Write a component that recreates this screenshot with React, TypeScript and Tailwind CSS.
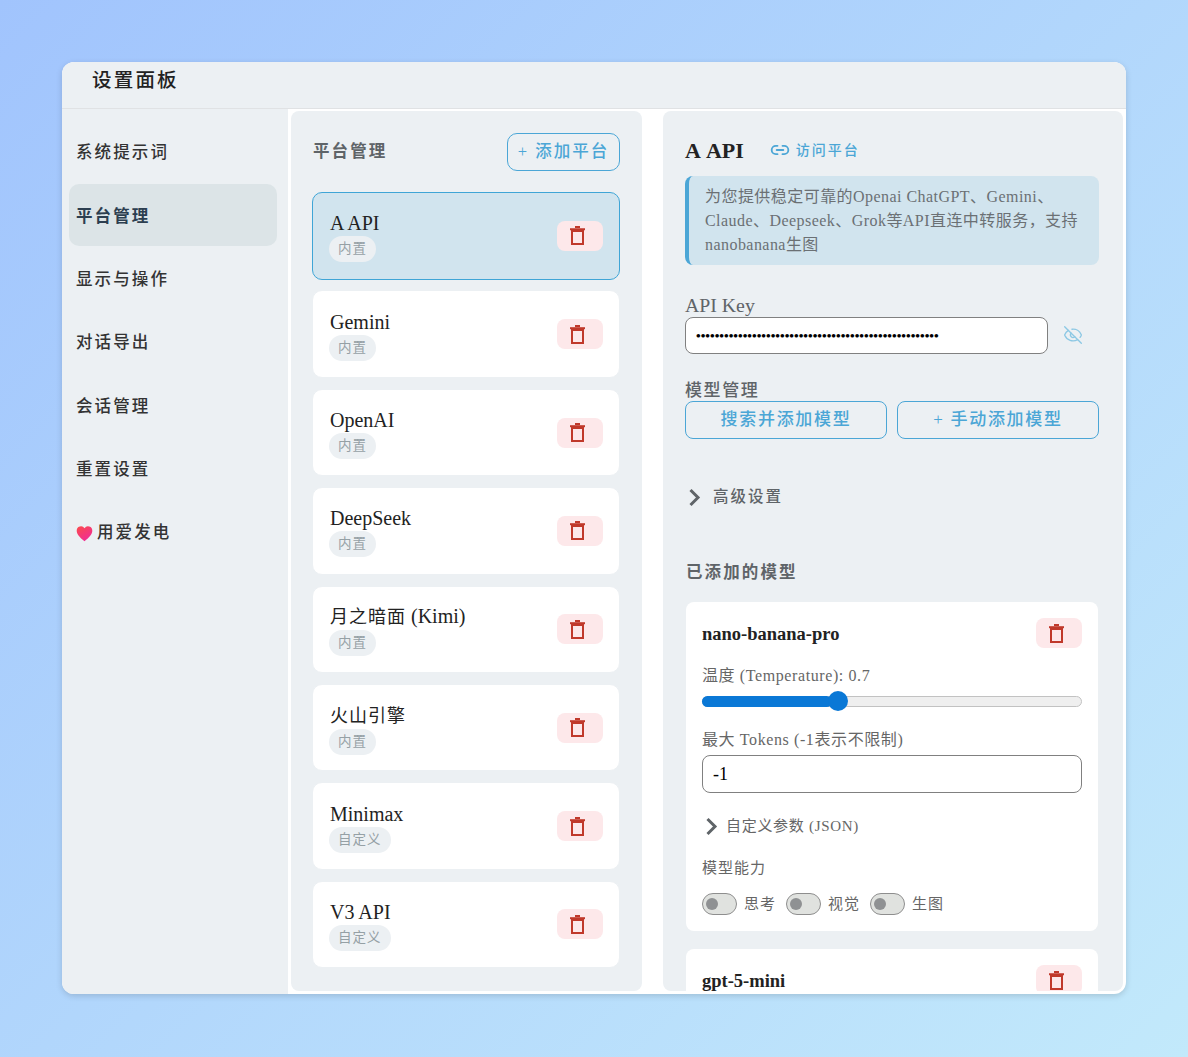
import { ReactNode } from "react";
import { EyeOff, Link2 } from "lucide-react";

const Zh = ({ children }: { children: ReactNode }) => (
  <span className="text-[18px] tracking-[1px]">{children}</span>
);

const platforms: { id: string; name: ReactNode; tag: string; active?: boolean }[] = [
  { id: "a", name: "A API", tag: "内置", active: true },
  { id: "gemini", name: "Gemini", tag: "内置" },
  { id: "openai", name: "OpenAI", tag: "内置" },
  { id: "deepseek", name: "DeepSeek", tag: "内置" },
  { id: "kimi", name: <><Zh>月之暗面</Zh> (Kimi)</>, tag: "内置" },
  { id: "volc", name: <Zh>火山引擎</Zh>, tag: "内置" },
  { id: "minimax", name: "Minimax", tag: "自定义" },
  { id: "v3", name: "V3 API", tag: "自定义" },
];

const menu = ["系统提示词", "平台管理", "显示与操作", "对话导出", "会话管理", "重置设置"];

const TrashIcon = () => (
  <svg width="15" height="19" viewBox="0 0 15 19" fill="none" stroke="#c0392b">
    <path d="M5 1h5" strokeWidth="2" />
    <path d="M0 3.2h15" strokeWidth="2" />
    <rect x="2" y="5" width="11" height="13" strokeWidth="2" />
  </svg>
);

const DeleteButton = () => (
  <button className="flex h-[30px] w-[46px] items-center justify-center rounded-lg bg-[#fde8ea] pr-[5px]">
    <TrashIcon />
  </button>
);

const Chevron = () => (
  <svg width="13" height="19" viewBox="0 0 13 19" fill="none" stroke="#5f6468" strokeWidth="3">
    <path d="M2.5 2 L10 9.5 L2.5 17" />
  </svg>
);

const Heart = () => (
  <svg width="17" height="17" viewBox="0 0 24 24">
    <defs>
      <linearGradient id="heart" x1="0" y1="0" x2="0.6" y2="1">
        <stop offset="0" stopColor="#fb4b4b" />
        <stop offset="1" stopColor="#f02c96" />
      </linearGradient>
    </defs>
    <path
      d="M12 23C5 17 1 13 1 8a6 6 0 0 1 11-3.4A6 6 0 0 1 23 8c0 5-4 9-11 15z"
      fill="url(#heart)"
    />
  </svg>
);

const Toggle = ({ label }: { label: string }) => (
  <div className="flex items-center gap-[7px]">
    <div className="flex h-[22px] w-[35px] items-center rounded-full border border-[#8e8e8e] bg-[#e0e2df] pl-[3px]">
      <div className="h-[12px] w-[12px] rounded-full bg-[#8f9193]" />
    </div>
    <span className="w-[34px] text-[15px] tracking-[1px] text-[#666]">{label}</span>
  </div>
);

export default function App() {
  return (
    <div
      className="min-h-[1057px] bg-[linear-gradient(135deg,#a1c4fd,#c2e9fb)] pt-[62px] text-[#222]"
      style={{ fontFamily: '"Liberation Serif", "Noto Sans CJK SC", serif' }}
    >
      <div className="mx-auto flex h-[932px] w-[1064px] flex-col overflow-hidden rounded-xl bg-white shadow-[0_2px_6px_rgba(0,0,0,0.15)]">
        <header className="h-[47px] shrink-0 border-b border-[#e0e2e4] bg-[#ecf0f3] pl-[30px] pt-[3px] text-[19.5px] font-medium leading-[32px] tracking-[2.2px] text-[#222]">
          设置面板
        </header>

        <div className="flex min-h-0 flex-1">
          <aside className="w-[226px] shrink-0 bg-[#ecf0f3] pl-[7px] pr-[11px] pt-[12px]">
            <div className="flex flex-col gap-[1.4px]">
              {menu.map((item) => (
                <div
                  key={item}
                  className={
                    item === "平台管理"
                      ? "flex h-[62px] items-center rounded-[10px] bg-[#dce4e7] pl-[7px] pt-[3px] text-[16.5px] font-bold tracking-[2.1px] text-[#2c3e50]"
                      : "flex h-[62px] items-center pl-[7px] pt-[3px] text-[16.5px] font-medium tracking-[2.1px] text-[#333]"
                  }
                >
                  {item}
                </div>
              ))}
              <div className="flex h-[62px] items-center gap-[4px] pl-[7px] pt-[3px] text-[16.5px] font-medium tracking-[2.1px] text-[#333]">
                <Heart />
                用爱发电
              </div>
            </div>
          </aside>

          <div className="flex min-h-0 flex-1 gap-[21px] pb-[3px] pl-[3px] pr-[3px] pt-[2px]">
            <section className="w-[351px] shrink-0 rounded-lg bg-[#ecf0f3] pl-[21px] pr-[22px] pt-[22px]">
              <div className="mb-[21px] flex h-[38px] items-center justify-between pl-[1px]">
                <h2 className="text-[16.5px] font-bold tracking-[2.1px] text-[#5f6468]">平台管理</h2>
                <button className="h-[38px] w-[113px] rounded-[10px] border border-[#4ba6d6] text-[16.5px] font-medium tracking-[2px] text-[#4ba6d6]">
                  + 添加平台
                </button>
              </div>
              <div className="flex flex-col gap-[10.9px]">
                {platforms.map((p) => (
                  <div
                    key={p.id}
                    className={
                      p.active
                        ? "flex h-[87.5px] items-center justify-between rounded-[10px] border border-[#3fa5d6] bg-[#d1e4ee] pl-[17px] pr-[16px]"
                        : "flex h-[87.5px] items-center justify-between rounded-[10px] border border-[#ecf0f3] bg-white pl-[17px] pr-[16px]"
                    }
                  >
                    <div className="pt-[2px]">
                      <div className="text-[20px] leading-[24px] text-[#222]">{p.name}</div>
                      <span className="-ml-[1px] mt-[1px] inline-block h-[26px] rounded-full bg-[#ecf0f3] px-[9px] text-[13.5px] leading-[26px] tracking-[1px] text-[#95a0a5]">
                        {p.tag}
                      </span>
                    </div>
                    <DeleteButton />
                  </div>
                ))}
              </div>
            </section>

            <section className="min-w-0 flex-1 overflow-hidden rounded-lg bg-[#ecf0f3] pl-[22px] pr-[24px] pt-[25px]">
              <div className="flex h-[28px] items-center">
                <h2 className="text-[22px] font-bold text-[#222] [word-spacing:2px]">A API</h2>
                <a className="ml-[26px] flex items-center gap-[6px] text-[14px] font-medium tracking-[2px] text-[#4ba6d6]">
                  <Link2 size={20} strokeWidth={2.2} />
                  访问平台
                </a>
              </div>

              <div className="mt-[12px] h-[89px] rounded-lg border-l-[4px] border-[#4ba6d6] bg-[#d1e4ee] pl-[16px] pr-[16px] pt-[9px] text-[16px] leading-[24px] tracking-[0.45px] text-[#6b7074]">
                为您提供稳定可靠的Openai ChatGPT、Gemini、Claude、Deepseek、Grok等API直连中转服务，支持nanobanana生图
              </div>

              <label className="mt-[29px] block text-[19.8px] leading-[23px] text-[#5f6468]">API Key</label>
              <div className="flex items-center">
                <input
                  type="password"
                  readOnly
                  value={"x".repeat(52)}
                  className="h-[37px] w-[363px] rounded-lg border border-[#808080] bg-white px-[10px] text-[13.33px] font-bold text-black outline-none"
                />
                <EyeOff size={20} strokeWidth={1.6} className="-mt-[1px] ml-[15px] text-[#8cc8e4]" />
              </div>

              <label className="mt-[27px] block text-[17px] font-medium leading-[20px] tracking-[1.6px] text-[#5f6468]">模型管理</label>
              <div className="flex gap-[10px]">
                <button className="h-[38px] flex-1 rounded-lg border border-[#4ba6d6] text-[17px] font-medium tracking-[1.7px] text-[#4ba6d6]">
                  搜索并添加模型
                </button>
                <button className="h-[38px] flex-1 rounded-lg border border-[#4ba6d6] text-[17px] font-medium tracking-[1.7px] text-[#4ba6d6]">
                  + 手动添加模型
                </button>
              </div>

              <div className="mt-[44px] flex h-[28px] items-center pl-[3px]">
                <Chevron />
                <span className="ml-[12px] text-[15.5px] font-medium tracking-[2px] text-[#5f6468]">高级设置</span>
              </div>

              <h3 className="ml-[1px] mt-[50px] text-[16.5px] font-bold leading-[24px] tracking-[2.1px] text-[#5f6468]">已添加的模型</h3>

              <div className="mx-[1px] mt-[17px] h-[329px] rounded-lg bg-white px-[16px] pt-[16px]">
                <div className="flex h-[30px] items-center justify-between">
                  <span className="pt-[3px] text-[18.5px] font-bold text-[#222]">nano-banana-pro</span>
                  <DeleteButton />
                </div>
                <div className="mt-[16px] text-[16px] leading-[24px] tracking-[0.6px] text-[#666]">温度 (Temperature): 0.7</div>
                <div className="relative mt-[3px] h-[20px]">
                  <div className="absolute inset-x-0 top-[4.5px] h-[11px] rounded-full border border-[#c2c2c2] bg-[#efefef]" />
                  <div className="absolute left-0 top-[4.5px] h-[11px] w-[130px] rounded-full bg-[#0a78d6]" />
                  <div className="absolute left-[126px] top-0 h-[20px] w-[20px] rounded-full bg-[#0a78d6]" />
                </div>
                <div className="mt-[17px] text-[16px] leading-[24px] tracking-[0.6px] text-[#666]">最大 Tokens (-1表示不限制)</div>
                <div className="mt-[3px] flex h-[38px] items-center rounded-lg border border-[#808080] bg-white pl-[10px] text-[18px] text-black">
                  -1
                </div>
                <div className="mt-[19px] flex h-[28px] items-center pl-[3px]">
                  <Chevron />
                  <span className="ml-[8px] text-[15px] tracking-[0.7px] text-[#666]">自定义参数 (JSON)</span>
                </div>
                <div className="mt-[16px] text-[15px] leading-[24px] tracking-[1px] text-[#666]">模型能力</div>
                <div className="mt-[13px] flex gap-[8px]">
                  <Toggle label="思考" />
                  <Toggle label="视觉" />
                  <Toggle label="生图" />
                </div>
              </div>

              <div className="mx-[1px] mt-[18px] h-[200px] rounded-lg bg-white px-[16px] pt-[16px]">
                <div className="flex h-[30px] items-center justify-between">
                  <span className="pt-[3px] text-[18.5px] font-bold text-[#222]">gpt-5-mini</span>
                  <DeleteButton />
                </div>
              </div>
            </section>
          </div>
        </div>
      </div>
    </div>
  );
}
